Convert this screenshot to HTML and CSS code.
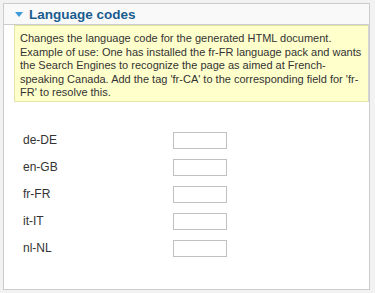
FILE: index.html
```html
<!DOCTYPE html>
<html>
<head>
<meta charset="utf-8">
<link rel="stylesheet" href="styles.css">
</head>
<body>
<div class="panel">
  <div class="panel-head">
    <span class="arrow"></span>
    <span class="title">Language codes</span>
  </div>
  <div class="panel-body">
    <div class="tip">Changes the language code for the generated HTML document. Example of use: One has installed the fr-FR language pack and wants the Search Engines to recognize the page as aimed at French-speaking Canada. Add the tag 'fr-CA' to the corresponding field for 'fr-FR' to resolve this.</div>
    <div class="rows">
      <div class="row"><span class="lbl">de-DE</span><input class="field" type="text"></div>
      <div class="row"><span class="lbl">en-GB</span><input class="field" type="text"></div>
      <div class="row"><span class="lbl">fr-FR</span><input class="field" type="text"></div>
      <div class="row"><span class="lbl">it-IT</span><input class="field" type="text"></div>
      <div class="row"><span class="lbl">nl-NL</span><input class="field" type="text"></div>
    </div>
  </div>
</div>
</body>
</html>
```
FILE: styles.css
```css
html, body {
  margin: 0;
  padding: 0;
  background: #f2f2f2;
  font-family: "Liberation Sans", Arial, sans-serif;
}
body {
  padding: 3px 0 0 3px;
}
.panel {
  width: 365px;
  height: 285px;
  border: 1px solid #cccccc;
  background: #ffffff;
}
.panel-head {
  height: 20px;
  background: #f9f9f9;
  border-bottom: 1px solid #cccccc;
  display: flex;
  align-items: center;
}
.arrow {
  width: 0;
  height: 0;
  margin-left: 11px;
  border-left: 4px solid transparent;
  border-right: 4px solid transparent;
  border-top: 5px solid #3b9ad6;
}
.title {
  margin-left: 6px;
  font-weight: bold;
  font-size: 13.5px;
  color: #1a5c8f;
}
.panel-body {
  padding-left: 10px;
}
.tip {
  background: #ffffcc;
  border: 1px solid #e3e3a8;
  border-right-color: #d4d4d4;
  padding: 6px 5px 1px 5px;
  font-size: 11px;
  line-height: 13.5px;
  color: #333333;
}
.rows {
  padding-top: 30px;
  display: flex;
  flex-direction: column;
  gap: 10px;
}
.row {
  display: flex;
  align-items: center;
  height: 17px;
}
.lbl {
  width: 150px;
  margin-left: 9px;
  font-size: 12px;
  color: #333333;
}
.field {
  width: 50px;
  height: 13px;
  margin: 0;
  padding: 1px;
  border: 1px solid #c0c0c0;
  background: #fff;
}
```
